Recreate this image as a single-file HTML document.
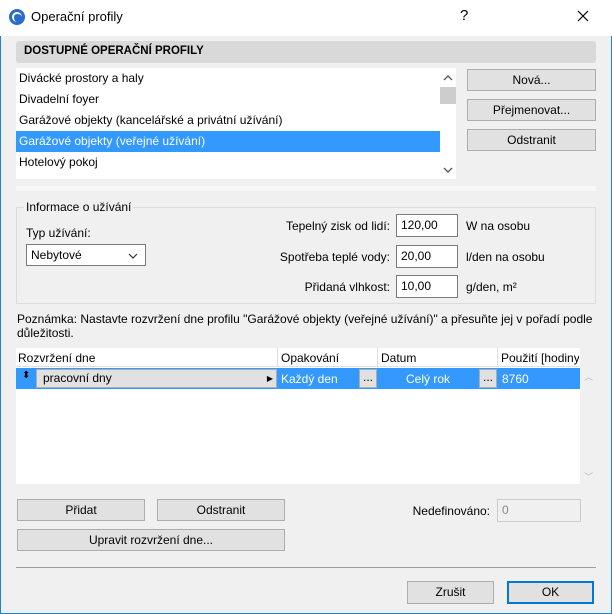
<!DOCTYPE html>
<html><head><meta charset="utf-8"><style>
*{box-sizing:border-box;margin:0;padding:0}
body{width:612px;height:614px;background:#f0f0f0;font-family:"Liberation Sans",sans-serif;font-size:12px;color:#000;position:relative;overflow:hidden}
.a{position:absolute}
.win{left:0;top:0;width:612px;height:614px;border:1px solid #1883d7;border-top:none}
.btn{position:absolute;background:#e1e1e1;border:1px solid #adadad;text-align:center;line-height:20px}
.inp{position:absolute;background:#fff;border:1px solid #7a7a7a;padding-left:4px;line-height:21px}
.item{position:absolute;left:16px;width:424px;height:21px;line-height:21px;padding-left:3px}
</style></head><body>
<div class="a win"></div>
<div class="a" style="left:0;top:0;width:612px;height:36px;background:#fff"></div>
<div class="a" style="left:9px;top:9px;width:16px;height:16px;border-radius:50%;background:#2a6cc8"></div>
<div class="a" style="left:12px;top:12px;width:10px;height:10px;border-radius:50%;border-left:2px solid #fff;border-top:2px solid #fff"></div>
<div class="a" style="left:31px;top:9px;font-size:13px">Operační profily</div>
<div class="a" style="left:460px;top:7px;font-size:15px">?</div>
<svg class="a" style="left:577px;top:10px" width="12" height="12"><path d="M1 1L11 11M11 1L1 11" stroke="#000" stroke-width="1.2"/></svg>

<div class="a" style="left:16px;top:41px;width:580px;height:22px;background:#d9d9d9;border-radius:3px"></div>
<div class="a" style="left:24px;top:45px;font-weight:bold;font-size:11.5px">DOSTUPNÉ OPERAČNÍ PROFILY</div>

<div class="a" style="left:16px;top:68px;width:440px;height:111px;background:#fff"></div>
<div class="item" style="top:68px">Divácké prostory a haly</div>
<div class="item" style="top:89px">Divadelní foyer</div>
<div class="item" style="top:110px">Garážové objekty (kancelářské a privátní užívání)</div>
<div class="item" style="top:131px;background:#3399ff;color:#fff">Garážové objekty (veřejné užívání)</div>
<div class="item" style="top:152px">Hotelový pokoj</div>
<svg class="a" style="left:443px;top:75px" width="10" height="6"><path d="M1 5L5 1L9 5" stroke="#555" fill="none" stroke-width="1.3"/></svg>
<div class="a" style="left:440px;top:87px;width:16px;height:17px;background:#cdcdcd"></div>
<svg class="a" style="left:443px;top:167px" width="10" height="6"><path d="M1 1L5 5L9 1" stroke="#555" fill="none" stroke-width="1.3"/></svg>

<div class="btn" style="left:467px;top:69px;width:129px;height:22px">Nová...</div>
<div class="btn" style="left:467px;top:99px;width:129px;height:22px">Přejmenovat...</div>
<div class="btn" style="left:467px;top:129px;width:129px;height:22px">Odstranit</div>

<div class="a" style="left:16px;top:186px;width:580px;height:5px;background:#f7f7f7"></div>

<div class="a" style="left:16px;top:207px;width:580px;height:97px;border:1px solid #dcdcdc"></div>
<div class="a" style="left:24px;top:200px;background:#f0f0f0;padding:0 2px">Informace o užívání</div>
<div class="a" style="left:26px;top:226px">Typ užívání:</div>
<div class="inp" style="left:26px;top:244px;width:120px;height:22px;line-height:20px">Nebytové<svg style="position:absolute;right:7px;top:8px" width="10" height="6"><path d="M1 1L5 5L9 1" stroke="#333" fill="none" stroke-width="1.2"/></svg></div>

<div class="a" style="left:200px;top:219px;width:190px;text-align:right">Tepelný zisk od lidí:</div>
<div class="inp" style="left:396px;top:214px;width:62px;height:23px">120,00</div>
<div class="a" style="left:466px;top:219px">W na osobu</div>
<div class="a" style="left:200px;top:250px;width:190px;text-align:right">Spotřeba teplé vody:</div>
<div class="inp" style="left:396px;top:245px;width:62px;height:23px">20,00</div>
<div class="a" style="left:466px;top:250px">l/den na osobu</div>
<div class="a" style="left:200px;top:280px;width:190px;text-align:right">Přidaná vlhkost:</div>
<div class="inp" style="left:396px;top:275px;width:62px;height:23px">10,00</div>
<div class="a" style="left:466px;top:280px">g/den, m²</div>

<div class="a" style="left:17px;top:312px;width:580px;line-height:14px">Poznámka: Nastavte rozvržení dne profilu "Garážové objekty (veřejné užívání)" a přesuňte jej v pořadí podle důležitosti.</div>

<div class="a" style="left:16px;top:348px;width:564px;height:136px;background:#fff"></div>
<div class="a" style="left:16px;top:348px;width:564px;height:19px;border-bottom:1px solid #e0e0e0"></div>
<div class="a" style="left:18px;top:351px">Rozvržení dne</div>
<div class="a" style="left:277px;top:348px;width:1px;height:19px;background:#e0e0e0"></div>
<div class="a" style="left:281px;top:351px">Opakování</div>
<div class="a" style="left:377px;top:348px;width:1px;height:19px;background:#e0e0e0"></div>
<div class="a" style="left:381px;top:351px">Datum</div>
<div class="a" style="left:497px;top:348px;width:1px;height:19px;background:#e0e0e0"></div>
<div class="a" style="left:501px;top:351px;width:78px;overflow:hidden;white-space:nowrap">Použití [hodiny]</div>
<div class="a" style="left:16px;top:368px;width:564px;height:21px;background:#3399ff"></div>
<div class="a" style="left:22px;top:370px;color:#000;font-size:10px">⬍</div>
<div class="a" style="left:36px;top:369px;width:241px;height:19px;background:#e1e1e1;border:1px solid #adadad;padding-left:6px;line-height:17px">pracovní dny<span style="position:absolute;right:3px;font-size:8px">▶</span></div>
<div class="a" style="left:281px;top:372px;color:#fff">Každý den</div>
<div class="a" style="left:359px;top:369px;width:18px;height:19px;background:#e1e1e1;border:1px solid #adadad;text-align:center;line-height:14px">...</div>
<div class="a" style="left:378px;top:372px;width:100px;text-align:center;color:#fff">Celý rok</div>
<div class="a" style="left:479px;top:369px;width:18px;height:19px;background:#e1e1e1;border:1px solid #adadad;text-align:center;line-height:14px">...</div>
<div class="a" style="left:502px;top:372px;color:#fff">8760</div>
<div class="a" style="left:584px;top:370px;font-size:9px;color:#bbb">︿</div>
<div class="a" style="left:584px;top:470px;font-size:9px;color:#bbb">﹀</div>

<div class="btn" style="left:17px;top:499px;width:128px;height:22px">Přidat</div>
<div class="btn" style="left:157px;top:499px;width:128px;height:22px">Odstranit</div>
<div class="btn" style="left:17px;top:529px;width:268px;height:22px">Upravit rozvržení dne...</div>
<div class="a" style="left:380px;top:504px;width:110px;text-align:right">Nedefinováno:</div>
<div class="a" style="left:497px;top:499px;width:84px;height:23px;border:1px solid #ccc;background:#f0f0f0;color:#888;padding-left:4px;line-height:21px">0</div>

<div class="a" style="left:16px;top:567px;width:580px;height:1px;background:#a0a0a0"></div>
<div class="btn" style="left:407px;top:581px;width:87px;height:23px">Zrušit</div>
<div class="btn" style="left:507px;top:581px;width:87px;height:23px;border:2px solid #0078d7;line-height:19px">OK</div>
</body></html>
